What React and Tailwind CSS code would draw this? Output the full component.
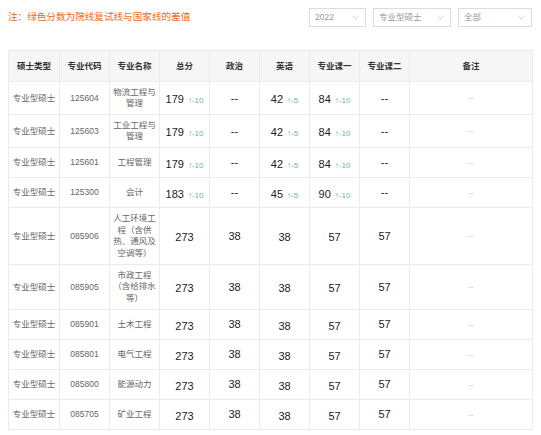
import React from "react";

const F = { fontFamily: '"Liberation Sans", "Noto Sans CJK SC", sans-serif' };

const rows = [
  { code: "125604", name: "物流工程与管理", total: ["179", "-10"], pol: "--", eng: ["42", "-5"], c1: ["84", "-10"], c2: "--", h: "h-[33px]" },
  { code: "125603", name: "工业工程与管理", total: ["179", "-10"], pol: "--", eng: ["42", "-5"], c1: ["84", "-10"], c2: "--", h: "h-[33px]" },
  { code: "125601", name: "工程管理", total: ["179", "-10"], pol: "--", eng: ["42", "-5"], c1: ["84", "-10"], c2: "--", h: "h-[30px]" },
  { code: "125300", name: "会计", total: ["183", "-10"], pol: "--", eng: ["45", "-5"], c1: ["90", "-10"], c2: "--", h: "h-[30px]" },
  { code: "085906", name: "人工环境工程（含供热、通风及空调等）", total: ["273"], pol: "38", eng: ["38"], c1: ["57"], c2: "57", h: "h-[57px]" },
  { code: "085905", name: "市政工程（含给排水等）", total: ["273"], pol: "38", eng: ["38"], c1: ["57"], c2: "57", h: "h-[45px]" },
  { code: "085901", name: "土木工程", total: ["273"], pol: "38", eng: ["38"], c1: ["57"], c2: "57", h: "h-[30px]" },
  { code: "085801", name: "电气工程", total: ["273"], pol: "38", eng: ["38"], c1: ["57"], c2: "57", h: "h-[30px]" },
  { code: "085800", name: "能源动力", total: ["273"], pol: "38", eng: ["38"], c1: ["57"], c2: "57", h: "h-[30px]" },
  { code: "085705", name: "矿业工程", total: ["273"], pol: "38", eng: ["38"], c1: ["57"], c2: "57", h: "h-[30px]" },
];

function Score({ v }) {
  return (
    <span className="whitespace-nowrap">
      <span className="text-[11px] text-[#222]">{v[0]}</span>
      {v[1] && <span className="ml-[4px] text-[8px] text-[#5cb99c]">↑{v[1]}</span>}
    </span>
  );
}

function Select({ label, w }) {
  return (
    <div className={`${w} h-[19px] border border-[#dcdcdc] bg-white flex items-center justify-between pl-[5px] pr-[6px]`}>
      <span className="text-[8.5px] text-[#999]">{label}</span>
      <svg width="7" height="5" viewBox="0 0 7 5" className="text-[#c8c8c8]">
        <path d="M0.5 0.5 L3.5 4.3 L6.5 0.5" fill="none" stroke="currentColor" strokeWidth="0.8" />
      </svg>
    </div>
  );
}

const cell = "border border-[#ebebeb] text-center align-middle px-[3px] py-0";

export default function App() {
  return (
    <div className="w-[541px] h-[435px] bg-white overflow-hidden" style={F}>
      <div className="flex items-center justify-between h-[34px] pl-[8px] pr-[9px]">
        <div className="text-[9.6px] text-[#f06a14]">注：绿色分数为院线复试线与国家线的差值</div>
        <div className="flex gap-[7px]">
          <Select label="2022" w="w-[57px]" />
          <Select label="专业型硕士" w="w-[78px]" />
          <Select label="全部" w="w-[74px]" />
        </div>
      </div>
      <div className="pl-[8px] pt-[16px]">
        <table className="table-fixed border-collapse w-[525px]">
          <colgroup>
            <col className="w-[51px]" />
            <col className="w-[50px]" />
            <col className="w-[50px]" />
            <col className="w-[50px]" />
            <col className="w-[50px]" />
            <col className="w-[50px]" />
            <col className="w-[50px]" />
            <col className="w-[50px]" />
            <col />
          </colgroup>
          <thead>
            <tr className="h-[31px] bg-[#f6f6f6]">
              {["硕士类型", "专业代码", "专业名称", "总分", "政治", "英语", "专业课一", "专业课二", "备注"].map((t) => (
                <th key={t} className={`${cell} text-[8.5px] font-bold text-[#333]`}>{t}</th>
              ))}
            </tr>
          </thead>
          <tbody>
            {rows.map((r) => (
              <tr key={r.code} className={r.h}>
                <td className={`${cell} text-[8.5px] text-[#666] whitespace-nowrap`}>专业型硕士</td>
                <td className={`${cell} text-[8.5px] text-[#666]`}>{r.code}</td>
                <td className="border border-[#ebebeb] text-center align-middle px-[1px] py-0 text-[8.5px] text-[#666] leading-[11.5px]">{r.name}</td>
                <td className={cell}><Score v={r.total} /></td>
                <td className={`${cell} text-[11px] text-[#222]`}>{r.pol}</td>
                <td className={cell}><Score v={r.eng} /></td>
                <td className={cell}><Score v={r.c1} /></td>
                <td className={`${cell} text-[11px] text-[#222]`}>{r.c2}</td>
                <td className={`${cell} text-[7.5px] text-[#bbb]`}>--</td>
              </tr>
            ))}
          </tbody>
        </table>
      </div>
    </div>
  );
}
